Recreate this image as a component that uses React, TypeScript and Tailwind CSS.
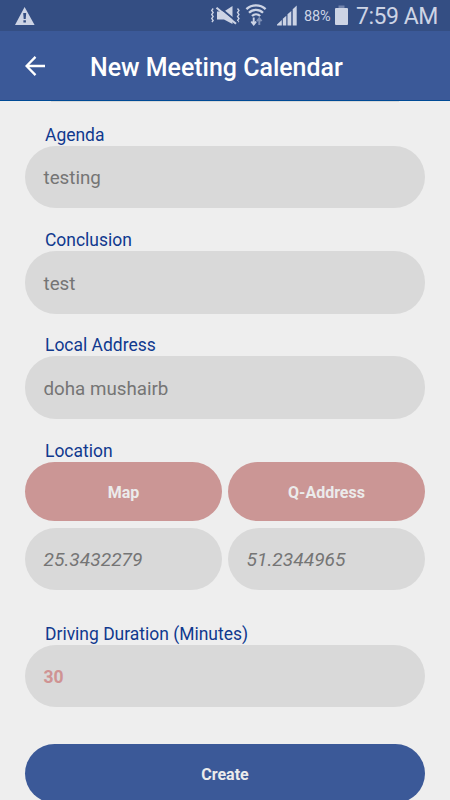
import React from 'react';

function StatusBar() {
  return (
    <div className="flex h-[31px] shrink-0 items-center bg-[#344e83] text-[#cdd4e5]">
      <svg className="ml-[15px] mt-px h-[18px] w-[20px]" viewBox="0 0 20 18" fill="currentColor">
        <path fillRule="evenodd" d="M9.6 0 19.6 18H0ZM8.2 6l.5 6h2l.5-6ZM8.4 13.3v2.3h2.5v-2.3Z" />
      </svg>
      <svg className="ml-[175px] h-[31px] w-[31px]" viewBox="0 0 31 31" fill="none" stroke="currentColor">
        <path d="M3.200 8.500 1.700 10.500l1.500 2-1.500 2 1.500 2-1.500 2 1.500 2-1.300 1.700M27.500 8.500l1.500 2-1.500 2 1.500 2-1.500 2 1.500 2-1.500 2 1.300 1.700" strokeWidth="1.300" />
        <path d="M7 11.500h7L22.500 6v18L14 19.500H7Z" fill="currentColor" stroke="none" />
        <path d="M8.500 6.500 28 22.800" stroke="#344e83" strokeWidth="2" />
        <path d="M6.500 7.700 26 23.800" strokeWidth="2.100" />
      </svg>
      <svg className="ml-[4px] h-[31px] w-[23px]" viewBox="0 0 23 31" fill="none" stroke="currentColor" strokeWidth="2.300">
        <path d="M1.400 9.200a14 14 0 0 1 19.200 0M4 12.700a10 10 0 0 1 14 0M7 16a6 6 0 0 1 8.200 0" />
        <path d="M8.700 17.500v6M6.300 21.500l2.400 3 2.400-3" strokeWidth="1.900" />
        <path d="M14.300 25v-6M12 21.200l2.300-3 2.300 3" stroke="#8092b7" strokeWidth="1.900" />
      </svg>
      <svg className="ml-[9px] h-[31px] w-[20px]" viewBox="0 0 20 31" fill="currentColor">
        <path d="M0 24.500 4.800 20v5.500H0ZM5.800 18.800 9.300 15.700v9.800H5.800ZM10.500 14.300 14.300 11v14.500h-3.800ZM15.700 9.200 19.700 5.500v20h-4Z" />
      </svg>
      <span className="ml-[7px] mt-[3px] w-[29px] text-[14.5px] leading-5 tracking-[-0.2px]">88%</span>
      <svg className="ml-[2px] h-[31px] w-[13px]" viewBox="0 0 13 31">
        <path d="M3.500 5.500h6V9h-6Z" fill="#7183ac" />
        <rect x="0" y="8" width="13" height="17" rx="1" fill="currentColor" />
      </svg>
      <span className="ml-[8px] mt-[3px] whitespace-nowrap text-[23px] leading-7 tracking-[-0.450px]">7:59 AM</span>
    </div>
  );
}

function Header() {
  return (
    <header className="flex h-[70px] shrink-0 items-center border-b border-[#004a95] bg-[#3b5998] text-white">
      <svg className="ml-[25px] h-[20px] w-[20px]" viewBox="0 0 20 20" fill="none" stroke="currentColor" strokeWidth="2.300">
        <path d="M20 10H2M10.500 .9 1.500 10l9 9.100" />
      </svg>
      <h1 className="ml-[45px] mt-[4px] whitespace-nowrap text-[24.950px] font-medium leading-8">New Meeting Calendar</h1>
    </header>
  );
}

function Label({ text }: { text: string }) {
  return <div className="h-[22px] whitespace-nowrap pl-5 text-[17.480px] leading-[22px] text-[#10398e]">{text}</div>;
}

function Value({ text, look }: { text: string; look: string }) {
  return (
    <div className={`flex h-[62.500px] min-w-0 flex-1 items-center rounded-[31px] bg-[#d9d9d9] pl-[18.500px] ${look}`}>
      {text}
    </div>
  );
}

const plain = 'pt-[3px] text-[18.750px] text-[#757575]';
const italic = 'pt-[3px] text-[19.200px] italic text-[#757575]';
const pinkBold = 'pt-[1px] text-[17.500px] font-bold text-[#cf9393]';

function Field({ label, value, look = plain }: { label: string; value: string; look?: string }) {
  return (
    <section>
      <Label text={label} />
      <div className="flex">
        <Value text={value} look={look} />
      </div>
    </section>
  );
}

function PinkButton({ text }: { text: string }) {
  return (
    <button className="flex h-[59.500px] flex-1 items-center justify-center rounded-[30px] bg-[#cb9695] pt-[3px] text-[16px] font-bold text-[#ebebeb]">
      {text}
    </button>
  );
}

export default function App() {
  return (
    <div className="flex h-[800px] w-[450px] flex-col overflow-hidden bg-[#eeeeee] font-['Roboto',sans-serif]">
      <StatusBar />
      <Header />
      <main className="flex min-h-0 flex-1 flex-col overflow-hidden px-[25px]">
        <div className="mx-[26px] h-px shrink-0 bg-[#d9d9d9]" />
        <div className="mt-[21.700px] flex shrink-0 flex-col gap-[20.900px]">
          <Field label="Agenda" value="testing" />
          <Field label="Conclusion" value="test" />
          <Field label="Local Address" value="doha mushairb" />
          <section>
            <Label text="Location" />
            <div className="flex gap-[6px]">
              <PinkButton text="Map" />
              <PinkButton text="Q-Address" />
            </div>
            <div className="mt-[6.300px] flex gap-[6px]">
              <Value text="25.3432279" look={italic} />
              <Value text="51.2344965" look={italic} />
            </div>
          </section>
        </div>
        <div className="mt-[32.800px] shrink-0">
          <Field label="Driving Duration (Minutes)" value="30" look={pinkBold} />
        </div>
        <button className="mt-[36.500px] flex h-[59.500px] shrink-0 items-center justify-center rounded-[30px] bg-[#3b5998] pt-[3px] text-[16px] font-bold text-[#ebebeb]">
          Create
        </button>
      </main>
    </div>
  );
}
